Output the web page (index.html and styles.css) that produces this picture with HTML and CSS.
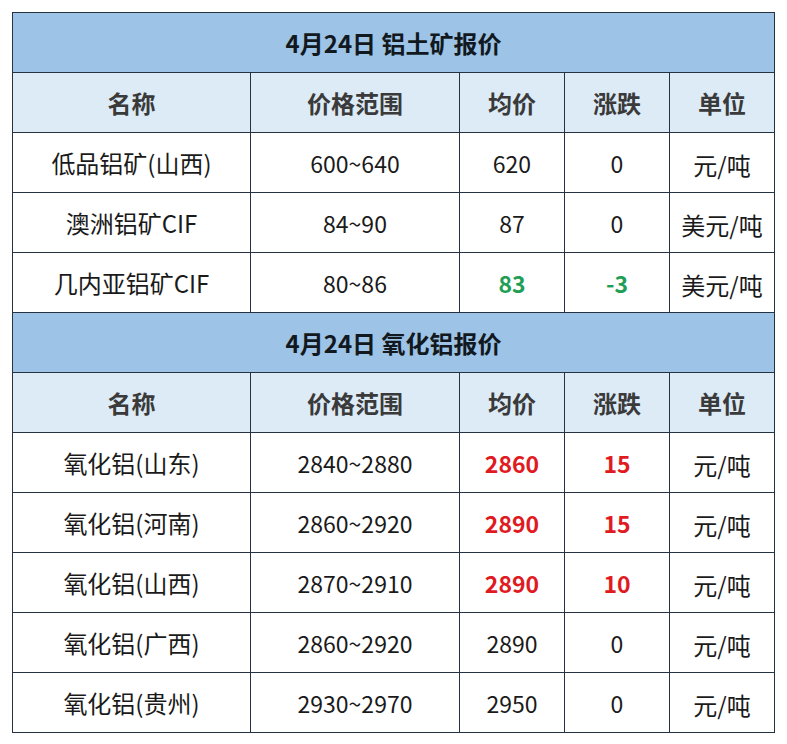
FILE: index.html
```html
<!DOCTYPE html>
<html lang="zh-CN">
<head>
<meta charset="utf-8">
<title>4月24日 铝土矿报价</title>
<link rel="stylesheet" href="styles.css">
</head>
<body>
<table class="quote">
  <colgroup>
    <col class="c-name"><col class="c-range"><col class="c-avg"><col class="c-chg"><col class="c-unit">
  </colgroup>
  <tbody>
    <tr class="title"><td colspan="5">4月24日 铝土矿报价</td></tr>
    <tr class="head"><td>名称</td><td>价格范围</td><td>均价</td><td>涨跌</td><td>单位</td></tr>
    <tr><td class="name">低品铝矿(山西)</td><td>600~640</td><td>620</td><td>0</td><td class="unit">元/吨</td></tr>
    <tr><td class="name">澳洲铝矿CIF</td><td>84~90</td><td>87</td><td>0</td><td class="unit">美元/吨</td></tr>
    <tr><td class="name">几内亚铝矿CIF</td><td>80~86</td><td class="down">83</td><td class="down">-3</td><td class="unit">美元/吨</td></tr>
    <tr class="title"><td colspan="5">4月24日 氧化铝报价</td></tr>
    <tr class="head"><td>名称</td><td>价格范围</td><td>均价</td><td>涨跌</td><td>单位</td></tr>
    <tr><td class="name">氧化铝(山东)</td><td>2840~2880</td><td class="up">2860</td><td class="up">15</td><td class="unit">元/吨</td></tr>
    <tr><td class="name">氧化铝(河南)</td><td>2860~2920</td><td class="up">2890</td><td class="up">15</td><td class="unit">元/吨</td></tr>
    <tr><td class="name">氧化铝(山西)</td><td>2870~2910</td><td class="up">2890</td><td class="up">10</td><td class="unit">元/吨</td></tr>
    <tr><td class="name">氧化铝(广西)</td><td>2860~2920</td><td>2890</td><td>0</td><td class="unit">元/吨</td></tr>
    <tr><td class="name">氧化铝(贵州)</td><td>2930~2970</td><td>2950</td><td>0</td><td class="unit">元/吨</td></tr>
  </tbody>
</table>
</body>
</html>
```

FILE: styles.css
```css
html, body {
  margin: 0;
  padding: 0;
  background: #ffffff;
}
body {
  padding: 12px 0 0 12px;
  font-family: "Noto Sans CJK SC", "Noto Sans", sans-serif;
  color: #1a1a1a;
}
.quote {
  border-collapse: collapse;
  table-layout: fixed;
  width: 763px;
}
.c-name { width: 238px; }
.c-range { width: 209px; }
.c-avg, .c-chg, .c-unit { width: 105px; }
.quote tr {
  height: 60px;
}
.quote td {
  border: 1px solid #253242;
  padding: 0;
  text-align: center;
  vertical-align: middle;
  font-size: 23px;
  line-height: 24px;
}
.quote tr.title td {
  background: #9dc3e6;
  font-weight: bold;
  color: #111820;
  font-size: 24px;
}
.quote tr.head td {
  background: #ddebf7;
  font-weight: bold;
  color: #3a3a3a;
  font-size: 24px;
}
.quote td.name {
  font-size: 24px;
}
.quote td.unit {
  font-size: 24px;
  padding-top: 4px;
}
.quote td.down {
  color: #1f9e55;
  font-weight: bold;
}
.quote td.up {
  color: #e01b1f;
  font-weight: bold;
}
```
